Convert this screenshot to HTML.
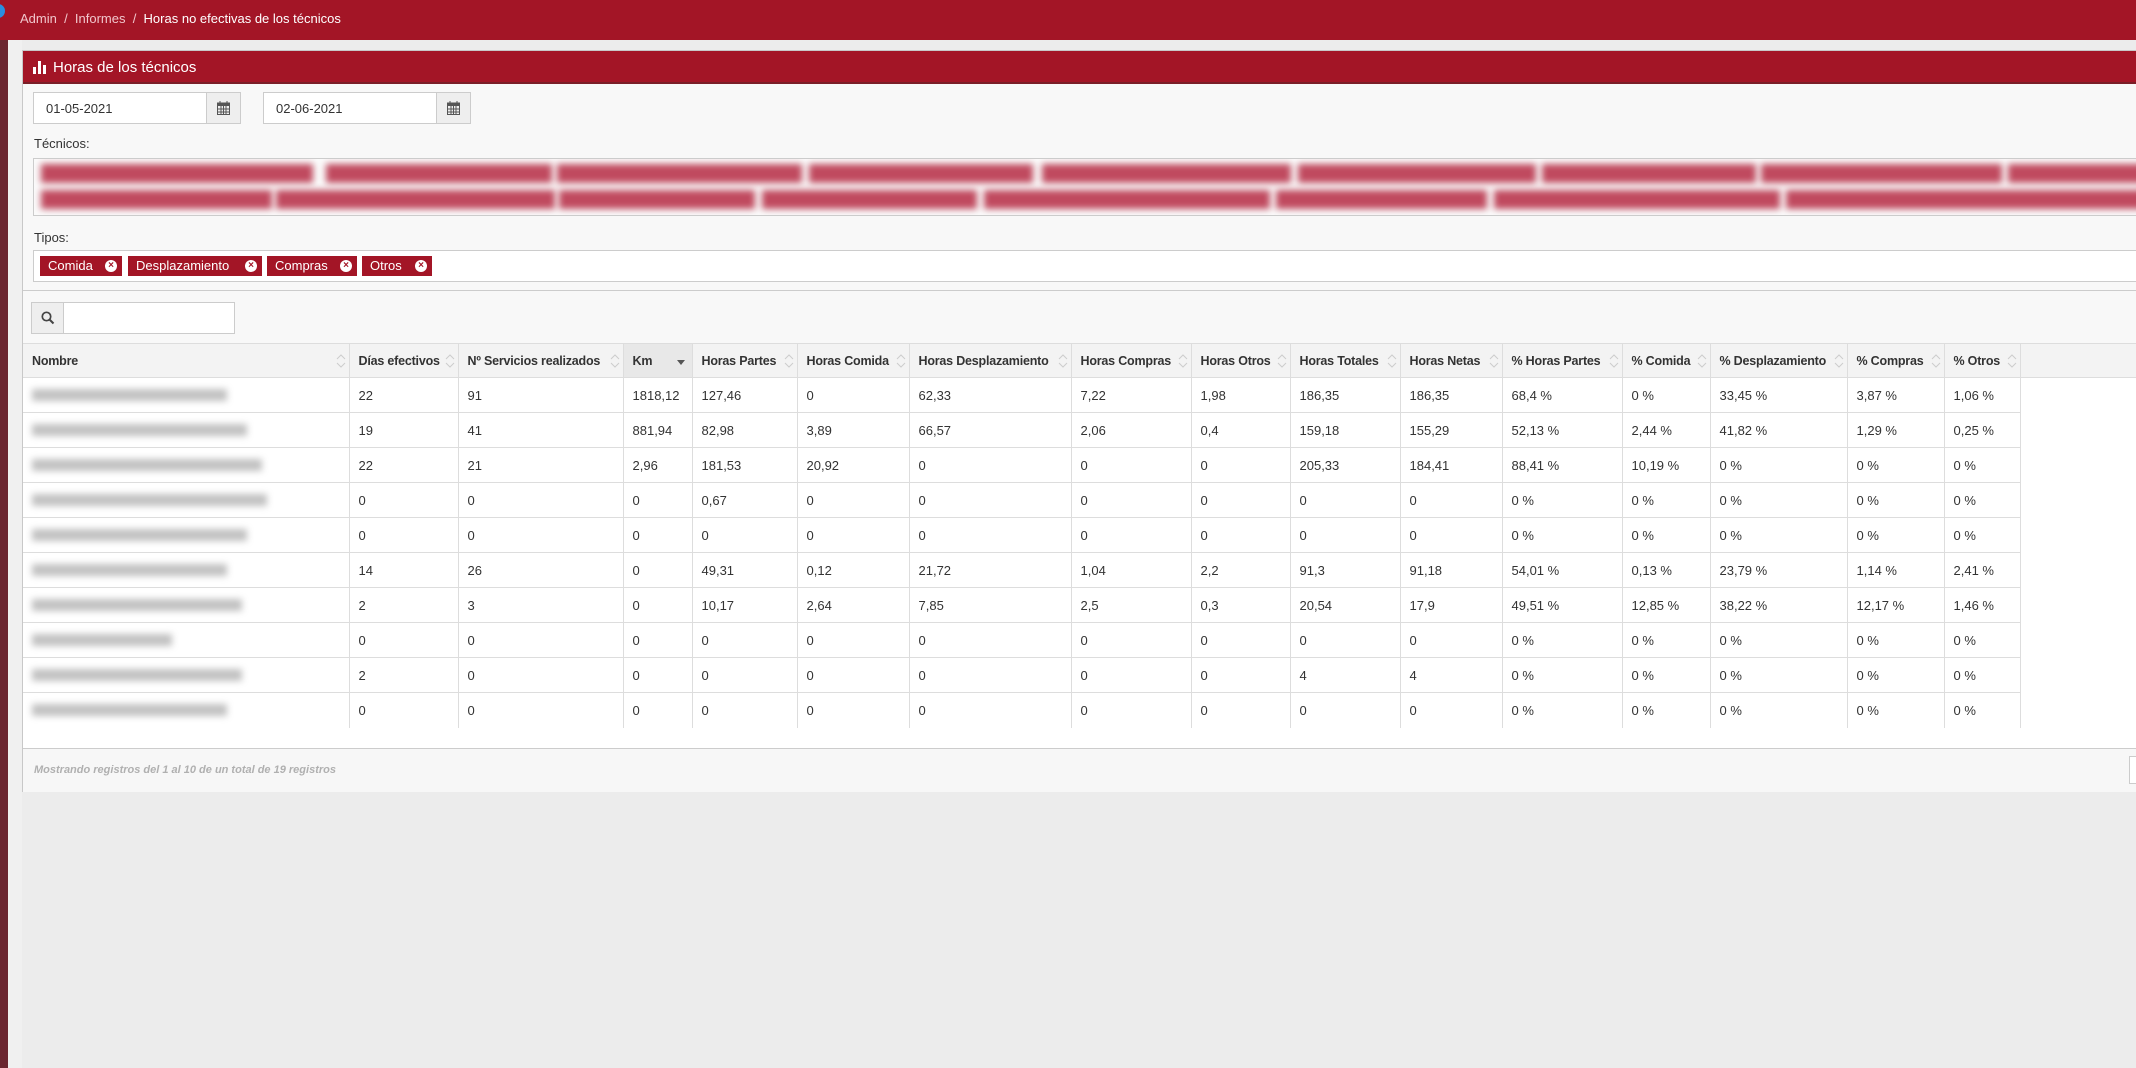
<!DOCTYPE html>
<html><head><meta charset="utf-8">
<style>
*{box-sizing:border-box;margin:0;padding:0}
html,body{width:2136px;height:1068px;overflow:hidden}
body{background:#ececec;font-family:"Liberation Sans",sans-serif;color:#333;position:relative}
.top{position:absolute;left:0;top:0;width:2136px;height:40px;background:#a31526}
.bc{position:absolute;left:20px;top:11px;font-size:13px;color:#f1c6cc}
.bc b{font-weight:normal;color:#fff}
.dot{position:absolute;left:-9px;top:4px;width:14px;height:14px;border-radius:50%;background:#2a8ee0}
.strip{position:absolute;left:0;top:40px;width:8px;height:1028px;background:#6b2630}
.strip2{position:absolute;left:8px;top:40px;width:14px;height:1028px;background:#f0f0f0}
.panel{position:absolute;left:22px;top:50px;width:2120px;height:742px;background:#f8f8f8;border:1px solid #c8c8c8;border-right:none}
.ph{position:absolute;left:0;top:0;width:100%;height:33px;background:#a31526;border-bottom:2px solid #7a1f28}
.ph span{position:absolute;left:30px;top:8px;color:#fff;font-size:15px}
.ico{position:absolute;left:10px;top:10px}
.inp{position:absolute;height:32px;background:#fff;border:1px solid #ccc;font-size:13px;padding:8px 12px}
.add{position:absolute;top:0;right:0;width:34px;height:30px;background:#eee;border-left:1px solid #ccc}
.lbl{position:absolute;font-size:13px;color:#333}
.box{position:absolute;background:#fff;border:1px solid #ccc}
.bt{position:absolute;height:19px;background:#c04a5f;filter:blur(3.5px)}
.tag{position:absolute;top:205px;height:20px;background:#a31526;color:#fff;font-size:13px;padding:2px 8px;line-height:16px}
.tag i{position:absolute;right:5px;top:4px;width:12px;height:12px;border-radius:50%;background:#fff;color:#a31526;font-style:normal;font-size:10px;line-height:12px;text-align:center;font-weight:bold}
table{position:absolute;left:0px;top:292px;border-collapse:collapse;table-layout:fixed;font-size:13px}
th{height:34px;background:#f3f3f3;text-align:left;font-weight:bold;padding:0 9px;border-right:1px solid #ddd;border-bottom:1px solid #ddd;border-top:1px solid #ddd;position:relative;white-space:nowrap;font-size:12.5px;letter-spacing:-0.2px}
td{height:35px;padding:0 9px;border-right:1px solid #ddd;border-bottom:1px solid #ddd;background:#fff;white-space:nowrap}
tr:last-child td{border-bottom:none}
th svg{position:absolute;right:3px;top:10px}
.nm{display:block;height:12px;background:#a8a8a8;filter:blur(3.5px);opacity:.7}
</style></head><body>
<div class="top"><div class="dot"></div><div class="bc">Admin&nbsp; / &nbsp;Informes&nbsp; / &nbsp;<b>Horas no efectivas de los técnicos</b></div></div>
<div class="strip"></div><div class="strip2"></div>
<div class="panel">
<div class="ph"><svg class="ico" width="14" height="13" viewBox="0 0 14 13"><rect x="0" y="6" width="3" height="7" fill="#fff"/><rect x="5" y="0" width="3" height="13" fill="#fff"/><rect x="10" y="4" width="3" height="9" fill="#fff"/></svg><span>Horas de los técnicos</span></div>
<div class="inp" style="left:10px;top:41px;width:208px">01-05-2021<div class="add"><svg style="margin:8px 10px" width="13" height="14" viewBox="0 0 13 14"><rect x="0.5" y="2" width="12" height="11.5" fill="none" stroke="#555"/><rect x="0.5" y="2" width="12" height="3" fill="#555"/><path d="M3 0v3M10 0v3M0.5 8h12M0.5 11h12M4 5v9M6.5 5v9M9 5v9" stroke="#555"/></svg></div></div>
<div class="inp" style="left:240px;top:41px;width:208px">02-06-2021<div class="add"><svg style="margin:8px 10px" width="13" height="14" viewBox="0 0 13 14"><rect x="0.5" y="2" width="12" height="11.5" fill="none" stroke="#555"/><rect x="0.5" y="2" width="12" height="3" fill="#555"/><path d="M3 0v3M10 0v3M0.5 8h12M0.5 11h12M4 5v9M6.5 5v9M9 5v9" stroke="#555"/></svg></div></div>
<div class="lbl" style="left:11px;top:85px">Técnicos:</div>
<div class="box" style="left:10px;top:107px;width:2120px;height:58px;background:#fbfbfb;overflow:hidden">
<div class="bt" style="left:7px;top:5px;width:272px"></div><div class="bt" style="left:292px;top:5px;width:226px"></div><div class="bt" style="left:523px;top:5px;width:245px"></div><div class="bt" style="left:775px;top:5px;width:224px"></div><div class="bt" style="left:1008px;top:5px;width:249px"></div><div class="bt" style="left:1264px;top:5px;width:238px"></div><div class="bt" style="left:1508px;top:5px;width:214px"></div><div class="bt" style="left:1727px;top:5px;width:241px"></div><div class="bt" style="left:1974px;top:5px;width:140px"></div>
<div class="bt" style="left:7px;top:31px;width:231px"></div><div class="bt" style="left:242px;top:31px;width:279px"></div><div class="bt" style="left:525px;top:31px;width:196px"></div><div class="bt" style="left:728px;top:31px;width:215px"></div><div class="bt" style="left:950px;top:31px;width:286px"></div><div class="bt" style="left:1242px;top:31px;width:211px"></div><div class="bt" style="left:1460px;top:31px;width:286px"></div><div class="bt" style="left:1752px;top:31px;width:360px"></div>
</div>
<div class="lbl" style="left:11px;top:179px">Tipos:</div>
<div class="box" style="left:10px;top:199px;width:2120px;height:32px"></div>
<div class="tag" style="left:17px;width:82px">Comida<i>×</i></div>
<div class="tag" style="left:105px;width:134px">Desplazamiento<i>×</i></div>
<div class="tag" style="left:244px;width:90px">Compras<i>×</i></div>
<div class="tag" style="left:339px;width:70px">Otros<i>×</i></div>
<div style="position:absolute;left:0;top:239px;width:100%;border-top:1px solid #ccc"></div>
<div class="box" style="left:8px;top:251px;width:204px;height:32px"><div style="position:absolute;left:0;top:0;width:32px;height:30px;background:#eee;border-right:1px solid #ccc"><svg style="margin:8px 9px" width="14" height="14" viewBox="0 0 14 14"><circle cx="5.5" cy="5.5" r="4.2" fill="none" stroke="#444" stroke-width="1.7"/><path d="M8.5 8.5l4 4" stroke="#444" stroke-width="2"/></svg></div></div>
<div style="position:absolute;left:0;top:292px;width:100%;height:35px;background:#f3f3f3;border-top:1px solid #ddd;border-bottom:1px solid #ddd"></div>
<div style="position:absolute;left:0;top:327px;width:100%;height:370px;background:#fff"></div>
<table>
<colgroup><col style="width:326px"><col style="width:109px"><col style="width:165px"><col style="width:69px"><col style="width:105px"><col style="width:112px"><col style="width:162px"><col style="width:120px"><col style="width:99px"><col style="width:110px"><col style="width:102px"><col style="width:120px"><col style="width:88px"><col style="width:137px"><col style="width:97px"><col style="width:76px"></colgroup>
<tr>
<th>Nombre<svg width="10" height="14"><path d="M1 5l4-4 4 4M1 9l4 4 4-4" fill="none" stroke="#ccc"/></svg></th>
<th>Días efectivos<svg width="10" height="14"><path d="M1 5l4-4 4 4M1 9l4 4 4-4" fill="none" stroke="#ccc"/></svg></th>
<th>Nº Servicios realizados<svg width="10" height="14"><path d="M1 5l4-4 4 4M1 9l4 4 4-4" fill="none" stroke="#ccc"/></svg></th>
<th style="background:#e8e8e8">Km<svg width="10" height="14" style="right:6px"><path d="M1 6h8l-4 5z" fill="#555"/></svg></th>
<th>Horas Partes<svg width="10" height="14"><path d="M1 5l4-4 4 4M1 9l4 4 4-4" fill="none" stroke="#ccc"/></svg></th>
<th>Horas Comida<svg width="10" height="14"><path d="M1 5l4-4 4 4M1 9l4 4 4-4" fill="none" stroke="#ccc"/></svg></th>
<th>Horas Desplazamiento<svg width="10" height="14"><path d="M1 5l4-4 4 4M1 9l4 4 4-4" fill="none" stroke="#ccc"/></svg></th>
<th>Horas Compras<svg width="10" height="14"><path d="M1 5l4-4 4 4M1 9l4 4 4-4" fill="none" stroke="#ccc"/></svg></th>
<th>Horas Otros<svg width="10" height="14"><path d="M1 5l4-4 4 4M1 9l4 4 4-4" fill="none" stroke="#ccc"/></svg></th>
<th>Horas Totales<svg width="10" height="14"><path d="M1 5l4-4 4 4M1 9l4 4 4-4" fill="none" stroke="#ccc"/></svg></th>
<th>Horas Netas<svg width="10" height="14"><path d="M1 5l4-4 4 4M1 9l4 4 4-4" fill="none" stroke="#ccc"/></svg></th>
<th>% Horas Partes<svg width="10" height="14"><path d="M1 5l4-4 4 4M1 9l4 4 4-4" fill="none" stroke="#ccc"/></svg></th>
<th>% Comida<svg width="10" height="14"><path d="M1 5l4-4 4 4M1 9l4 4 4-4" fill="none" stroke="#ccc"/></svg></th>
<th>% Desplazamiento<svg width="10" height="14"><path d="M1 5l4-4 4 4M1 9l4 4 4-4" fill="none" stroke="#ccc"/></svg></th>
<th>% Compras<svg width="10" height="14"><path d="M1 5l4-4 4 4M1 9l4 4 4-4" fill="none" stroke="#ccc"/></svg></th>
<th>% Otros<svg width="10" height="14"><path d="M1 5l4-4 4 4M1 9l4 4 4-4" fill="none" stroke="#ccc"/></svg></th>
</tr>
<tr><td><span class="nm" style="width:195px"></span></td><td>22</td><td>91</td><td>1818,12</td><td>127,46</td><td>0</td><td>62,33</td><td>7,22</td><td>1,98</td><td>186,35</td><td>186,35</td><td>68,4 %</td><td>0 %</td><td>33,45 %</td><td>3,87 %</td><td>1,06 %</td></tr>
<tr><td><span class="nm" style="width:215px"></span></td><td>19</td><td>41</td><td>881,94</td><td>82,98</td><td>3,89</td><td>66,57</td><td>2,06</td><td>0,4</td><td>159,18</td><td>155,29</td><td>52,13 %</td><td>2,44 %</td><td>41,82 %</td><td>1,29 %</td><td>0,25 %</td></tr>
<tr><td><span class="nm" style="width:230px"></span></td><td>22</td><td>21</td><td>2,96</td><td>181,53</td><td>20,92</td><td>0</td><td>0</td><td>0</td><td>205,33</td><td>184,41</td><td>88,41 %</td><td>10,19 %</td><td>0 %</td><td>0 %</td><td>0 %</td></tr>
<tr><td><span class="nm" style="width:235px"></span></td><td>0</td><td>0</td><td>0</td><td>0,67</td><td>0</td><td>0</td><td>0</td><td>0</td><td>0</td><td>0</td><td>0 %</td><td>0 %</td><td>0 %</td><td>0 %</td><td>0 %</td></tr>
<tr><td><span class="nm" style="width:215px"></span></td><td>0</td><td>0</td><td>0</td><td>0</td><td>0</td><td>0</td><td>0</td><td>0</td><td>0</td><td>0</td><td>0 %</td><td>0 %</td><td>0 %</td><td>0 %</td><td>0 %</td></tr>
<tr><td><span class="nm" style="width:195px"></span></td><td>14</td><td>26</td><td>0</td><td>49,31</td><td>0,12</td><td>21,72</td><td>1,04</td><td>2,2</td><td>91,3</td><td>91,18</td><td>54,01 %</td><td>0,13 %</td><td>23,79 %</td><td>1,14 %</td><td>2,41 %</td></tr>
<tr><td><span class="nm" style="width:210px"></span></td><td>2</td><td>3</td><td>0</td><td>10,17</td><td>2,64</td><td>7,85</td><td>2,5</td><td>0,3</td><td>20,54</td><td>17,9</td><td>49,51 %</td><td>12,85 %</td><td>38,22 %</td><td>12,17 %</td><td>1,46 %</td></tr>
<tr><td><span class="nm" style="width:140px"></span></td><td>0</td><td>0</td><td>0</td><td>0</td><td>0</td><td>0</td><td>0</td><td>0</td><td>0</td><td>0</td><td>0 %</td><td>0 %</td><td>0 %</td><td>0 %</td><td>0 %</td></tr>
<tr><td><span class="nm" style="width:210px"></span></td><td>2</td><td>0</td><td>0</td><td>0</td><td>0</td><td>0</td><td>0</td><td>0</td><td>4</td><td>4</td><td>0 %</td><td>0 %</td><td>0 %</td><td>0 %</td><td>0 %</td></tr>
<tr><td><span class="nm" style="width:195px"></span></td><td>0</td><td>0</td><td>0</td><td>0</td><td>0</td><td>0</td><td>0</td><td>0</td><td>0</td><td>0</td><td>0 %</td><td>0 %</td><td>0 %</td><td>0 %</td><td>0 %</td></tr>
</table>
<div style="position:absolute;left:0;top:697px;width:100%;height:44px;background:#f7f7f7;border-top:1px solid #ccc"></div>
<div style="position:absolute;left:11px;top:713px;font-size:11px;font-style:italic;font-weight:bold;color:#b0b0b0">Mostrando registros del 1 al 10 de un total de 19 registros</div>
<div style="position:absolute;left:2106px;top:705px;width:30px;height:28px;background:#fff;border:1px solid #ccc"></div>
</div>
</body></html>
